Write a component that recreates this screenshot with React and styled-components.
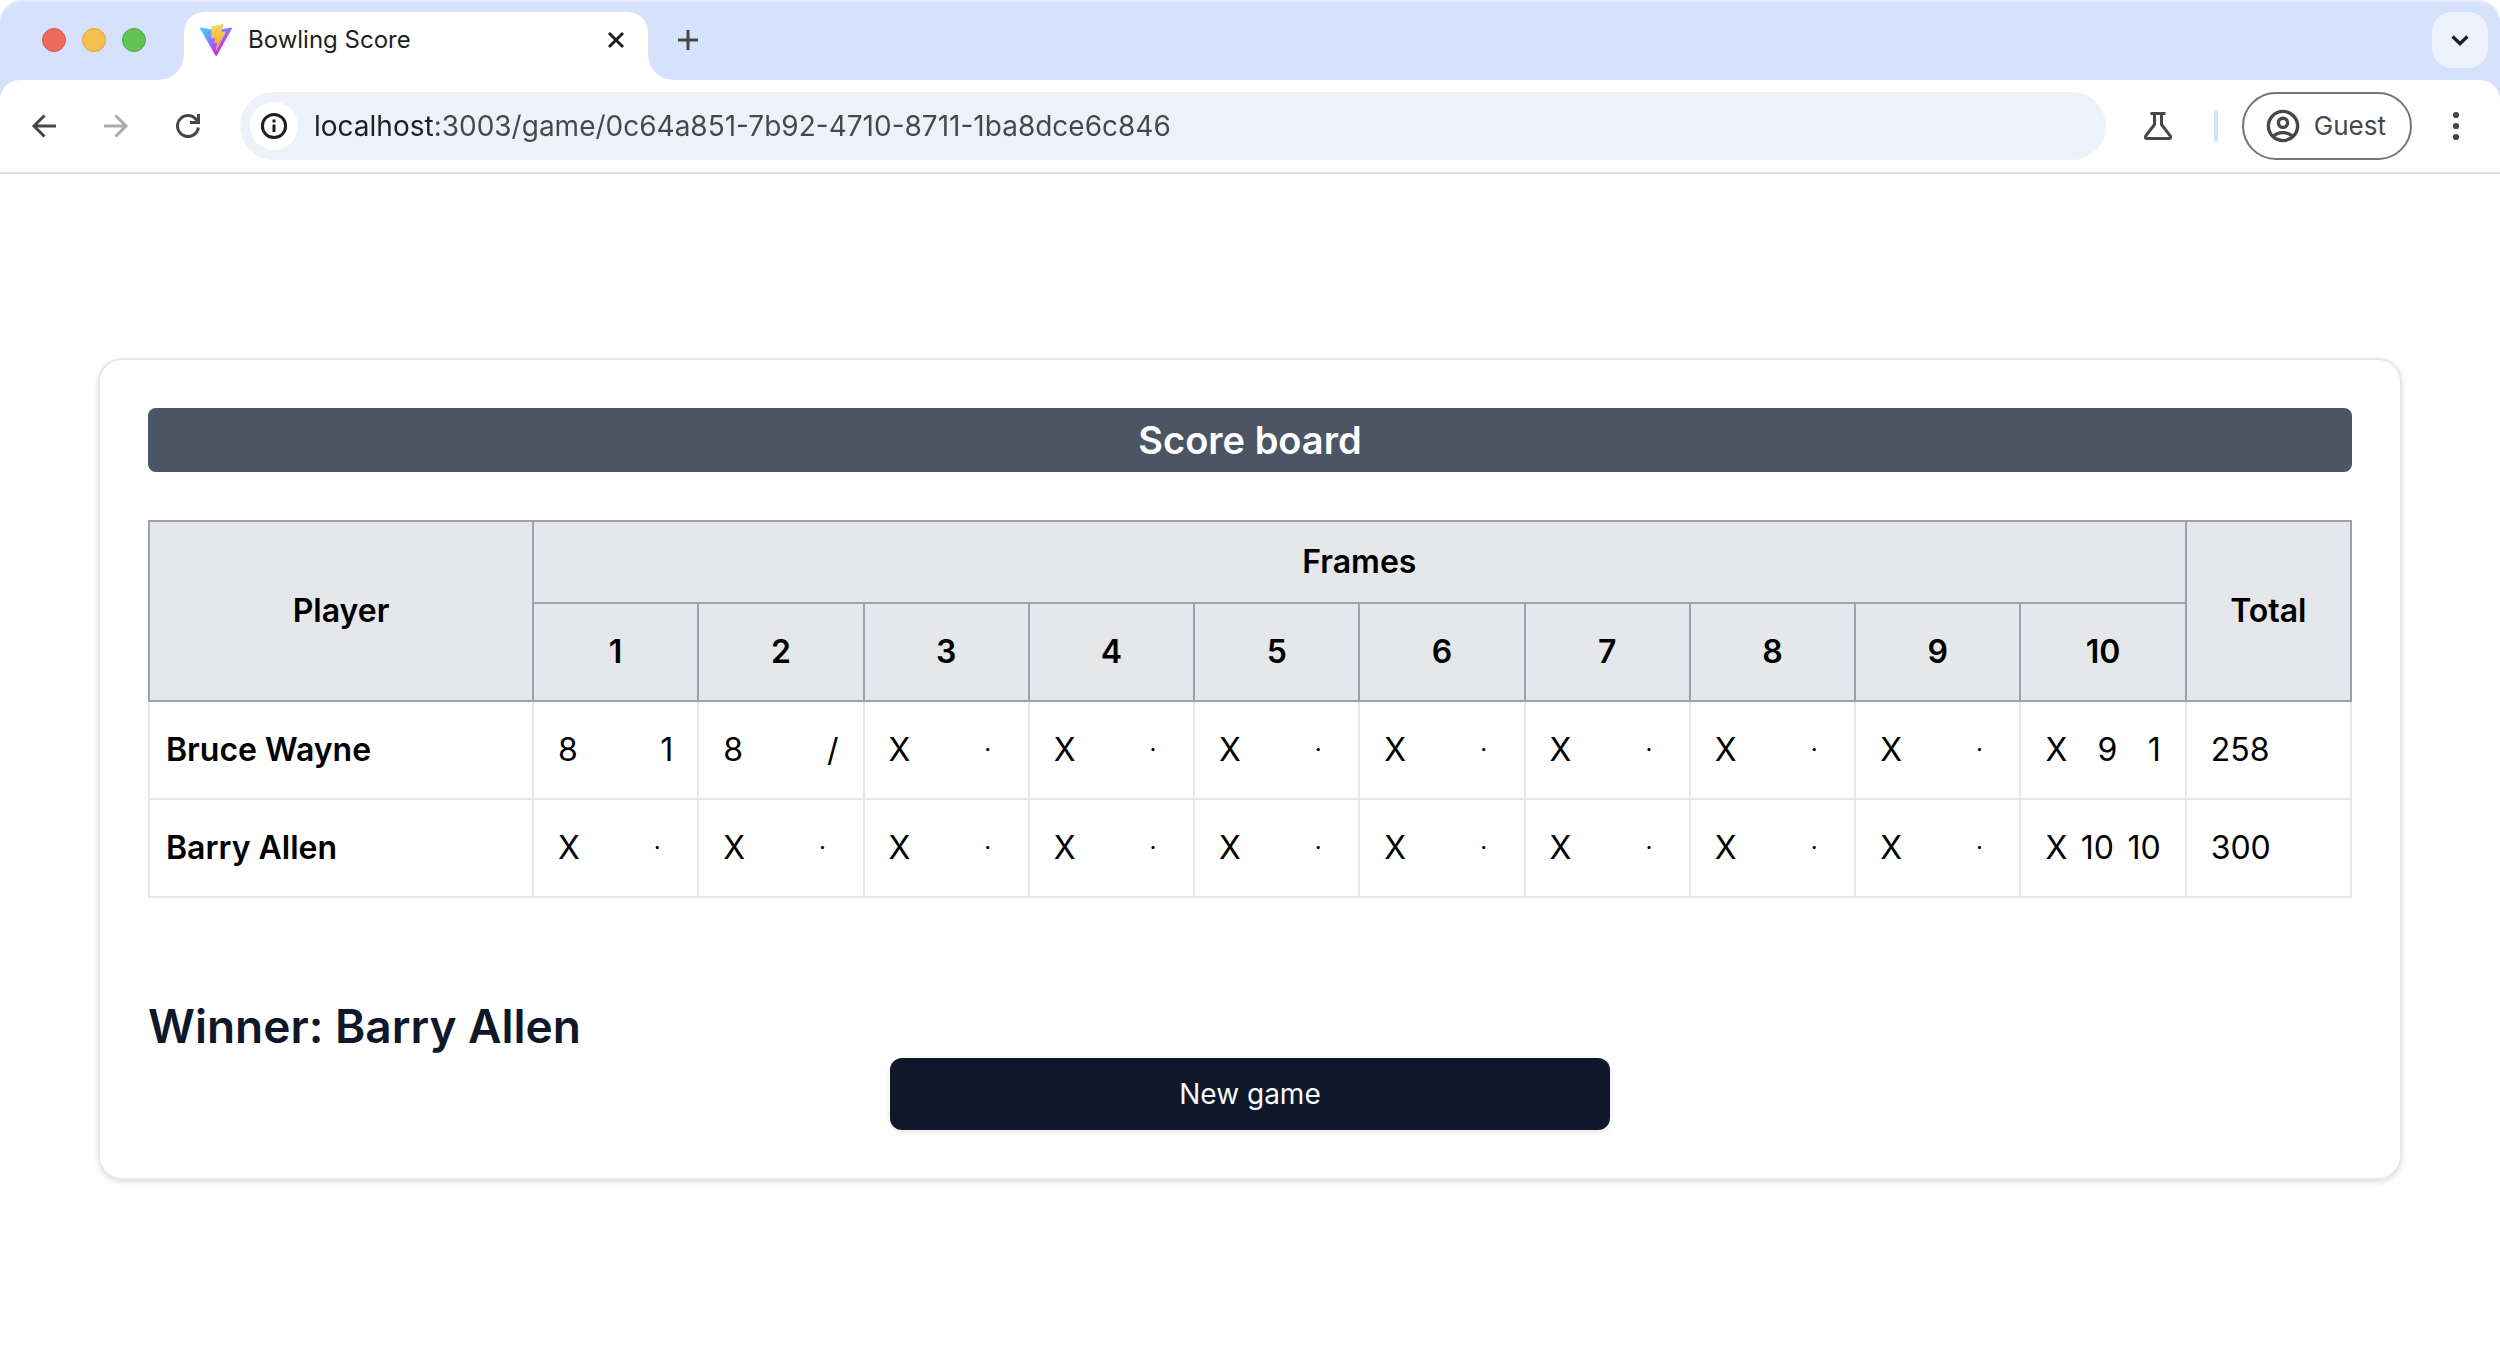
import React from "react";
import styled, { createGlobalStyle } from "styled-components";

const sans = `Inter, "Liberation Sans", sans-serif`;

const GlobalStyle = createGlobalStyle`
  *, *::before, *::after { box-sizing: border-box; }
  body { margin: 0; background: #ffffff; font-family: ${sans}; }
`;

const Window = styled.div`
  display: flex;
  flex-direction: column;
  min-height: 100vh;
`;

const Chrome = styled.header`
  background: #d6e1fb;
  border-radius: 22px 22px 0 0;
  box-shadow: inset 0 2px 0 #e6ecfb;
`;

const TabStrip = styled.div`
  display: flex;
  align-items: center;
  height: 80px;
  padding: 0 12px 0 42px;
`;

const Lights = styled.div`
  display: flex;
  gap: 16px;
`;

const Light = styled.button`
  width: 24px;
  height: 24px;
  padding: 0;
  border: 1px solid ${(p) => p.$edge};
  border-radius: 50%;
  background: ${(p) => p.$fill};
`;

const Tab = styled.div`
  position: relative;
  display: flex;
  align-items: center;
  gap: 16px;
  align-self: flex-end;
  width: 464px;
  height: 68px;
  margin-left: 38px;
  padding: 0 12px 12px 16px;
  border-radius: 20px 20px 0 0;
  background: #ffffff;

  &::before,
  &::after {
    content: "";
    position: absolute;
    bottom: 0;
    width: 24px;
    height: 24px;
  }
  &::before {
    right: 100%;
    background: radial-gradient(circle at 0 0, transparent 23px, #ffffff 24px);
  }
  &::after {
    left: 100%;
    background: radial-gradient(circle at 100% 0, transparent 23px, #ffffff 24px);
  }
`;

const TabTitle = styled.span`
  flex: 1;
  font-size: 24px;
  line-height: 32px;
  color: #1f1f1f;
`;

const IconButton = styled.button`
  display: grid;
  place-items: center;
  flex: none;
  width: ${(p) => p.$size || 56}px;
  height: ${(p) => p.$size || 56}px;
  padding: 0;
  border: 0;
  border-radius: 20px;
  background: ${(p) => p.$fill || "transparent"};
  color: ${(p) => p.$color || "#474747"};
`;

const NewTab = styled(IconButton)`
  margin: 0 auto 0 12px;
`;

const Toolbar = styled.div`
  display: flex;
  align-items: center;
  height: 94px;
  padding: 0 16px;
  border-bottom: 2px solid #dfdfdf;
  border-radius: 20px 20px 0 0;
  background: #ffffff;
`;

const NavButtons = styled.nav`
  display: flex;
  gap: 16px;
`;

const AddressBar = styled.div`
  display: flex;
  flex: 1;
  align-items: center;
  gap: 16px;
  height: 68px;
  margin: 0 24px;
  padding: 0 10px;
  border-radius: 34px;
  background: #edf2fa;
`;

const SiteInfo = styled(IconButton)`
  border-radius: 50%;
`;

const Address = styled.input`
  flex: 1;
  min-width: 0;
  padding: 0;
  border: 0;
  outline: 0;
  background: linear-gradient(to right, #1f1f1f 120px, #474747 120px);
  background-clip: text;
  color: transparent;
  font-family: ${sans};
  font-size: 28px;
  line-height: 36px;
`;

const Divider = styled.div`
  width: 4px;
  height: 32px;
  margin: 0 24px 0 28px;
  border-radius: 2px;
  background: #d6e1fb;
`;

const Profile = styled.button`
  display: flex;
  align-items: center;
  gap: 14px;
  height: 68px;
  margin-right: 16px;
  padding: 0 24px 0 22px;
  border: 2px solid #747474;
  border-radius: 34px;
  background: #ffffff;
  color: #474747;
  font-family: ${sans};
  font-size: 26px;
  line-height: 32px;
`;

const Page = styled.main`
  display: flex;
  flex: 1;
  flex-direction: column;
  justify-content: center;
  padding: 48px 98px;
`;

const Card = styled.section`
  padding: 48px;
  border: 2px solid #e2e8f0;
  border-radius: 24px;
  box-shadow: 0 2px 6px rgba(0, 0, 0, 0.1), 0 2px 4px -2px rgba(0, 0, 0, 0.1);
`;

const BoardTitle = styled.h1`
  margin: 0 0 48px;
  padding: 4px 0;
  border-radius: 8px;
  background: #4b5563;
  color: #ffffff;
  font-size: 38px;
  font-weight: 600;
  line-height: 56px;
  text-align: center;
`;

const Board = styled.table`
  width: 100%;
  table-layout: fixed;
  border-collapse: collapse;
  color: #000000;
  font-size: 32px;
  line-height: 48px;
`;

const PlayerCol = styled.col`
  width: 384px;
`;

const HeadCell = styled.th`
  padding: ${(p) => (p.$group ? 16 : 24)}px;
  border: 2px solid #9ca3af;
  background: #e5e7eb;
  font-weight: 600;
`;

const PlayerCell = styled.th`
  padding: 24px 16px;
  border: 2px solid #e2e8f0;
  font-weight: 600;
  text-align: left;
`;

const Cell = styled.td`
  padding: 24px;
  border: 2px solid #e2e8f0;
`;

const Throws = styled.div`
  display: flex;
  justify-content: space-between;
`;

const NoThrow = styled.span`
  width: 32px;
  font-size: 24px;
  text-align: center;
`;

const Winner = styled.h2`
  margin: 96px 0 0;
  color: #0f172a;
  font-size: 46px;
  font-weight: 600;
  line-height: 64px;
`;

const NewGame = styled.button`
  display: block;
  width: 720px;
  max-width: 100%;
  height: 72px;
  margin: 0 auto;
  border: 0;
  border-radius: 12px;
  background: #0f172a;
  box-shadow: 0 2px 6px rgba(0, 0, 0, 0.1);
  color: #f8fafc;
  font-family: ${sans};
  font-size: 28px;
  font-weight: 400;
  line-height: 40px;
`;

const Stroke = ({ size, width = 3, children, ...rest }) => (
  <svg
    width={size}
    height={size}
    viewBox={`0 0 ${size} ${size}`}
    fill="none"
    stroke="currentColor"
    strokeWidth={width}
    aria-hidden="true"
    {...rest}
  >
    {children}
  </svg>
);

const BackIcon = () => (
  <Stroke size={32}>
    <path d="M28 16H6M16.5 5.5 6 16l10.5 10.5" />
  </Stroke>
);

const ForwardIcon = () => (
  <Stroke size={32}>
    <path d="M4 16h22M15.5 5.5 26 16 15.5 26.5" />
  </Stroke>
);

const ReloadIcon = () => (
  <Stroke size={32}>
    <path d="M26.4 17.5A10.5 10.5 0 1 1 24 9.2L26.5 12.5" />
    <path d="M26.5 4v8.5H18" />
  </Stroke>
);

const InfoIcon = () => (
  <Stroke size={32}>
    <circle cx="16" cy="16" r="11.6" />
    <path d="M16 14.5V22M16 9.5v3" />
  </Stroke>
);

const FlaskIcon = () => (
  <Stroke size={32} strokeLinejoin="round">
    <path d="M8.5 3.5h15M12.5 3.5v11L3.6 26.2Q2.8 28.5 5 28.5H27Q29.2 28.5 28.4 26.2L19.5 14.5v-11" />
  </Stroke>
);

const GuestIcon = () => (
  <Stroke size={34} width={3.4}>
    <circle cx="17" cy="17" r="14.6" />
    <circle cx="17" cy="13.8" r="4.6" />
    <path d="M7 27.5C12.5 22.3 21.5 22.3 27 27.5" />
  </Stroke>
);

const MenuIcon = () => (
  <svg width="32" height="32" viewBox="0 0 32 32" fill="currentColor" aria-hidden="true">
    <circle cx="16" cy="5" r="3.1" />
    <circle cx="16" cy="16" r="3.1" />
    <circle cx="16" cy="27" r="3.1" />
  </svg>
);

const CloseIcon = () => (
  <Stroke size={20}>
    <path d="m3 3 14 14M17 3 3 17" />
  </Stroke>
);

const PlusIcon = () => (
  <Stroke size={24}>
    <path d="M12 2v20M2 12h20" />
  </Stroke>
);

const ChevronIcon = () => (
  <Stroke size={20} width={3.4}>
    <path d="m2.6 6.5 7.4 7.2 7.4-7.2" />
  </Stroke>
);

const ViteLogo = () => (
  <svg width="32" height="32" viewBox="0 0 256 257" aria-hidden="true">
    <defs>
      <linearGradient id="viteBody" x1="-.828%" x2="57.636%" y1="7.652%" y2="78.411%">
        <stop offset="0%" stopColor="#41D1FF" />
        <stop offset="100%" stopColor="#BD34FE" />
      </linearGradient>
      <linearGradient id="viteBolt" x1="43.376%" x2="50.316%" y1="2.242%" y2="89.03%">
        <stop offset="0%" stopColor="#F9E06A" />
        <stop offset="8.333%" stopColor="#F7D552" />
        <stop offset="100%" stopColor="#F0AA38" />
      </linearGradient>
    </defs>
    <path
      fill="url(#viteBody)"
      d="M255.153 37.938 134.897 252.976c-2.483 4.44-8.862 4.466-11.382.048L.875 37.958c-2.746-4.814 1.371-10.646 6.827-9.67l120.385 21.517a6.537 6.537 0 0 0 2.322-.004l117.867-21.483c5.438-.991 9.574 4.796 6.877 9.62Z"
    />
    <path
      fill="url(#viteBolt)"
      d="M185.432.063 96.44 17.501a3.268 3.268 0 0 0-2.634 3.014l-5.474 92.456a3.268 3.268 0 0 0 3.997 3.378l24.777-5.718c2.318-.535 4.413 1.507 3.936 3.838l-7.361 36.047c-.495 2.426 1.782 4.5 4.151 3.78l15.304-4.649c2.372-.72 4.652 1.36 4.15 3.788l-11.698 56.621c-.732 3.542 3.979 5.473 5.943 2.437l1.313-2.028 72.516-144.72c1.215-2.423-.88-5.186-3.54-4.672l-25.505 4.922c-2.396.462-4.435-1.77-3.759-4.114l16.646-57.705c.677-2.35-1.37-4.583-3.769-4.113Z"
    />
  </svg>
);

const frames = [1, 2, 3, 4, 5, 6, 7, 8, 9, 10];
const strike = ["X", null];

const players = [
  {
    name: "Bruce Wayne",
    throws: [["8", "1"], ["8", "/"], strike, strike, strike, strike, strike, strike, strike, ["X", "9", "1"]],
    total: 258,
  },
  {
    name: "Barry Allen",
    throws: [strike, strike, strike, strike, strike, strike, strike, strike, strike, ["X", "10", "10"]],
    total: 300,
  },
];

function ScoreTable() {
  return (
    <Board>
      <colgroup>
        <PlayerCol />
        {frames.map((n) => (
          <col key={n} />
        ))}
        <col />
      </colgroup>
      <thead>
        <tr>
          <HeadCell rowSpan={2}>Player</HeadCell>
          <HeadCell colSpan={10} $group>
            Frames
          </HeadCell>
          <HeadCell rowSpan={2}>Total</HeadCell>
        </tr>
        <tr>
          {frames.map((n) => (
            <HeadCell key={n}>{n}</HeadCell>
          ))}
        </tr>
      </thead>
      <tbody>
        {players.map((player) => (
          <tr key={player.name}>
            <PlayerCell scope="row">{player.name}</PlayerCell>
            {player.throws.map((rolls, i) => (
              <Cell key={i}>
                <Throws>
                  {rolls.map((roll, j) =>
                    roll === null ? <NoThrow key={j}>·</NoThrow> : <span key={j}>{roll}</span>
                  )}
                </Throws>
              </Cell>
            ))}
            <Cell>{player.total}</Cell>
          </tr>
        ))}
      </tbody>
    </Board>
  );
}

export default function App() {
  return (
    <Window>
      <GlobalStyle />
      <Chrome>
        <TabStrip>
          <Lights>
            <Light $fill="#ed6a5e" $edge="#d8574c" aria-label="Close window" />
            <Light $fill="#f5bf4f" $edge="#d9a43e" aria-label="Minimize window" />
            <Light $fill="#61c554" $edge="#52a944" aria-label="Zoom window" />
          </Lights>
          <Tab>
            <ViteLogo />
            <TabTitle>Bowling Score</TabTitle>
            <IconButton $size={40} $color="#1f1f1f" aria-label="Close tab">
              <CloseIcon />
            </IconButton>
          </Tab>
          <NewTab aria-label="New tab">
            <PlusIcon />
          </NewTab>
          <IconButton $fill="#ebf2fc" $color="#1f1f1f" aria-label="Search tabs">
            <ChevronIcon />
          </IconButton>
        </TabStrip>
        <Toolbar>
          <NavButtons>
            <IconButton aria-label="Back">
              <BackIcon />
            </IconButton>
            <IconButton $color="#ababab" aria-label="Forward">
              <ForwardIcon />
            </IconButton>
            <IconButton aria-label="Reload">
              <ReloadIcon />
            </IconButton>
          </NavButtons>
          <AddressBar>
            <SiteInfo $size={48} $fill="#ffffff" $color="#1f1f1f" aria-label="Site information">
              <InfoIcon />
            </SiteInfo>
            <Address
              type="text"
              aria-label="Address"
              defaultValue="localhost:3003/game/0c64a851-7b92-4710-8711-1ba8dce6c846"
            />
          </AddressBar>
          <IconButton aria-label="Labs">
            <FlaskIcon />
          </IconButton>
          <Divider />
          <Profile>
            <GuestIcon />
            Guest
          </Profile>
          <IconButton aria-label="Menu">
            <MenuIcon />
          </IconButton>
        </Toolbar>
      </Chrome>
      <Page>
        <Card>
          <BoardTitle>Score board</BoardTitle>
          <ScoreTable />
          <Winner>Winner: Barry Allen</Winner>
          <NewGame>New game</NewGame>
        </Card>
      </Page>
    </Window>
  );
}
